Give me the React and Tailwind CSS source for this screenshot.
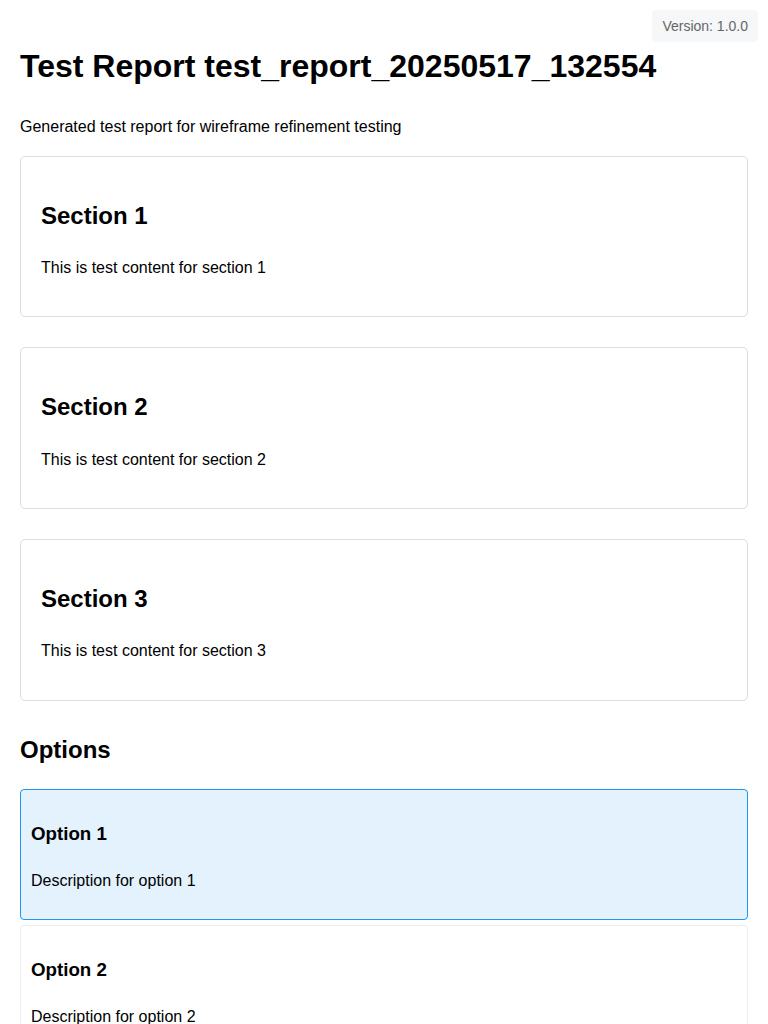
const sections = [1, 2, 3];
const options = [
  { id: 1, selected: true },
  { id: 2, selected: false },
];

export default function App() {
  return (
    <div className="relative min-h-screen bg-white p-5 font-['Liberation_Sans',Arial,sans-serif] text-[16px] leading-[1.6] text-black">
      <div className="absolute right-[10px] top-[10px] rounded bg-[#f6f7f9] px-[10px] py-[5px] text-[14px] text-[#666]">
        Version: 1.0.0
      </div>

      <h1 className="my-[21.44px] text-[32px] font-bold">Test Report test_report_20250517_132554</h1>
      <p className="my-4">Generated test report for wireframe refinement testing</p>

      {sections.map((n) => (
        <div key={n} className="mb-[30px] rounded-[5px] border border-[#ddd] p-5">
          <h2 className="my-[19.92px] text-[24px] font-bold">Section {n}</h2>
          <p className="my-4">This is test content for section {n}</p>
        </div>
      ))}

      <h2 className="my-[19.92px] text-[24px] font-bold">Options</h2>
      {options.map((o) => (
        <div
          key={o.id}
          className={
            o.selected
              ? 'mb-[5px] rounded border border-[#2196f3] bg-[#e3f2fd] p-[10px]'
              : 'mb-[5px] rounded border border-[#eee] bg-white p-[10px]'
          }
        >
          <h3 className="my-[18.72px] text-[18.72px] font-bold">Option {o.id}</h3>
          <p className="my-4">Description for option {o.id}</p>
        </div>
      ))}
    </div>
  );
}
